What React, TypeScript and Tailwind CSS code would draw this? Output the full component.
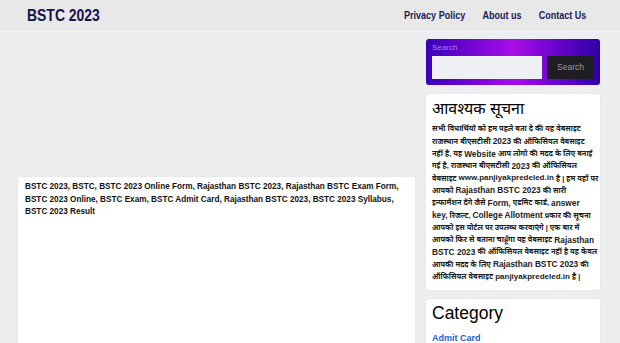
import React from 'react'

function Header() {
  return (
    <header className="h-[30px] bg-[#e8e8e9] flex items-center justify-between pl-[27px] pr-[34px]">
      <span className="text-[17px] font-bold text-[#14134a] leading-none scale-x-[0.82] origin-left">
        BSTC 2023
      </span>
      <nav className="flex items-center gap-[21px] text-[11px] font-bold text-[#1b1a55] scale-x-[0.82] origin-right">
        <a href="#">Privacy Policy</a>
        <a href="#">About us</a>
        <a href="#">Contact Us</a>
      </nav>
    </header>
  )
}

function SearchBox() {
  return (
    <div className="rounded-[3px] bg-[linear-gradient(90deg,#3a00b8_0%,#7a06d6_30%,#a80ee6_50%,#6a04cc_75%,#2c00a6_100%)] px-[6px] pt-[3px] pb-[6px]">
      <div className="text-[8px] leading-[11px] text-[#b77af0] mb-[3px]">Search</div>
      <div className="flex gap-[5px]">
        <input className="h-[23px] w-[110px] bg-[#eef0f4] border-0 outline-none" />
        <button className="h-[23px] flex-1 bg-[#1e1d22] text-[#9b9b9f] text-[8.5px]">Search</button>
      </div>
    </div>
  )
}

// Latin words and Devanagari words are set at different sizes, as in the screenshot
function Mixed({ text }: { text: string }) {
  const parts = text.split(/([A-Za-z0-9][A-Za-z0-9.,]*(?: [A-Za-z0-9][A-Za-z0-9.,]*)*)/)
  return (
    <span className="flex items-center h-[12.3px] whitespace-nowrap overflow-visible">
      {parts.map((p, i) => {
        if (p.includes('.in')) {
          return <span key={i} className="text-[8px] leading-none whitespace-pre">{p}</span>
        }
        if (/[A-Za-z0-9]/.test(p)) {
          return <span key={i} className="text-[8.3px] leading-none whitespace-pre">{p}</span>
        }
        return <span key={i} className="text-[7.4px] leading-none whitespace-pre">{p}</span>
      })}
    </span>
  )
}

function Notice() {
  const lines = [
    'सभी विधार्थियों को हम पहले बता दे की यह वेबसाइट',
    'राजस्थान बीएसटीसी 2023 की ऑफिसियल वेबसाइट',
    'नहीं है, यह Website आप लोगो की मदद के लिए बनाई',
    'गई है, राजस्थान बीएसटीसी 2023 की ऑफिसियल',
    'वेबसाइट www.panjiyakpredeled.in है | हम यहाँ पर',
    'आपको Rajasthan BSTC 2023 की सारी',
    'इन्फार्मेशन देंगे जैसे Form, एडमिट कार्ड, answer',
    'key, रिजल्ट, College Allotment प्रकार की सूचना',
    'आपको इस पोर्टल पर उपलब्ध करवाएंगे | एक बार में',
    'आपको फिर से बताना चाहूँगा यह वेबसाइट Rajasthan',
    'BSTC 2023 की ऑफिसियल वेबसाइट नहीं है यह केवल',
    'आपकी मदद के लिए Rajasthan BSTC 2023 की',
    'ऑफिसियल वेबसाइट panjiyakpredeled.in है |',
  ]
  return (
    <div className="bg-white rounded-[3px] shadow-[0_0_2px_rgba(0,0,0,0.08)] px-[6px] pt-[4px] pb-[7px]">
      <h2 className="text-[16px] leading-[22px] text-black mb-[3px]">आवश्यक सूचना</h2>
      <div className="font-bold text-[#222]">
        {lines.map((l, i) => (
          <Mixed key={i} text={l} />
        ))}
      </div>
    </div>
  )
}

function Category() {
  return (
    <div className="bg-white rounded-[3px] shadow-[0_0_2px_rgba(0,0,0,0.08)] px-[6px] pt-[2px] pb-[8px]">
      <h2 className="text-[17.5px] leading-[24px] text-black mb-[7px]">Category</h2>
      <a href="#" className="block text-[9px] font-semibold text-[#2563c9]">Admit Card</a>
    </div>
  )
}

export default function App() {
  return (
    <div
      className="min-h-screen bg-[#edeef0] overflow-hidden"
      style={{ fontFamily: '"Liberation Sans", Arial, "Noto Sans Devanagari", sans-serif' }}
    >
      <Header />
      <main className="flex items-start gap-[11px] pl-[18px] pr-[20px] pt-[9px]">
        {/* Left column */}
        <div className="w-[397px] shrink-0">
          {/* empty ad slot */}
          <div className="h-[138px]" />
          <div className="bg-white rounded-[2px] shadow-[0_0_2px_rgba(0,0,0,0.08)] px-[7px] pt-[4px] min-h-[200px]">
            <p className="text-[8.2px] leading-[12.5px] font-bold text-[#111]">
              BSTC 2023, BSTC, BSTC 2023 Online Form, Rajasthan BSTC 2023, Rajasthan BSTC Exam Form, BSTC 2023
              Online, BSTC Exam, BSTC Admit Card, Rajasthan BSTC 2023, BSTC 2023 Syllabus, BSTC 2023 Result
            </p>
          </div>
        </div>

        {/* Sidebar */}
        <aside className="w-[174px] shrink-0 flex flex-col gap-[9px]">
          <SearchBox />
          <Notice />
          <Category />
        </aside>
      </main>
    </div>
  )
}
